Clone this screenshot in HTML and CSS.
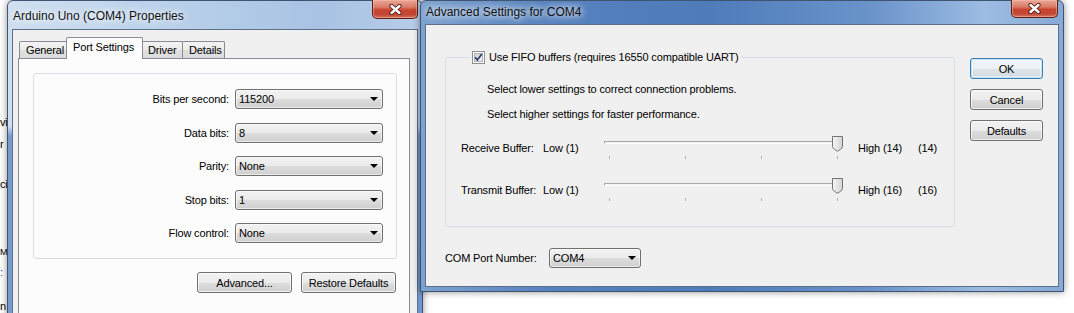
FILE: index.html
```html
<!DOCTYPE html>
<html lang="en">
<head>
    <meta charset="UTF-8">
    <title>COM4 Port Settings</title>
    <link rel="stylesheet" href="styles.css">
</head>
<body>
    <div class="desktop">
        <!-- window behind, only its left edge shows -->
        <div class="backwin">
            <span class="frag frag-1">vi</span>
            <span class="frag frag-2">r</span>
            <span class="frag frag-3">ci</span>
            <span class="frag frag-4">M</span>
            <span class="frag frag-5 link">:</span>
            <span class="frag frag-6">n</span>
        </div>

        <div class="window props">
            <div class="titlebar">
                <span class="title">Arduino Uno (COM4) Properties</span>
                <span class="close">
                    <svg width="13" height="11" viewBox="0 0 13 11">
                        <path d="M2.5 2 L10.5 9 M10.5 2 L2.5 9" stroke="#4a1a14" stroke-width="4.2" stroke-linecap="round"/>
                        <path d="M2.5 2 L10.5 9 M10.5 2 L2.5 9" stroke="#fff" stroke-width="2.4" stroke-linecap="round"/>
                    </svg>
                </span>
            </div>
            <div class="client">
                <div class="tabs">
                    <div class="tab tab-general">General</div>
                    <div class="tab active">Port Settings</div>
                    <div class="tab tab-driver">Driver</div>
                    <div class="tab tab-details">Details</div>
                </div>
                <div class="tab-page">
                    <div class="group port-group">
                        <span class="field-label">Bits per second:</span>
                        <div class="combo">115200</div>
                        <span class="field-label">Data bits:</span>
                        <div class="combo">8</div>
                        <span class="field-label">Parity:</span>
                        <div class="combo">None</div>
                        <span class="field-label">Stop bits:</span>
                        <div class="combo">1</div>
                        <span class="field-label">Flow control:</span>
                        <div class="combo">None</div>
                    </div>
                    <div class="actions">
                        <button class="btn btn-wide">Advanced...</button>
                        <button class="btn btn-wide">Restore Defaults</button>
                    </div>
                </div>
            </div>
        </div>

        <div class="window advanced">
            <div class="titlebar">
                <span class="title">Advanced Settings for COM4</span>
                <span class="close">
                    <svg width="13" height="11" viewBox="0 0 13 11">
                        <path d="M2.5 2 L10.5 9 M10.5 2 L2.5 9" stroke="#4a1a14" stroke-width="4.2" stroke-linecap="round"/>
                        <path d="M2.5 2 L10.5 9 M10.5 2 L2.5 9" stroke="#fff" stroke-width="2.4" stroke-linecap="round"/>
                    </svg>
                </span>
            </div>
            <div class="client adv-client">
                <div class="adv-main">
                    <div class="group fifo-group">
                        <div class="legend">
                            <span class="checkbox">
                                <svg width="13" height="13" viewBox="0 0 13 13">
                                    <defs>
                                        <linearGradient id="cbg" x1="0" y1="0" x2="1" y2="1">
                                            <stop offset="0" stop-color="#cbcfd5"/>
                                            <stop offset="1" stop-color="#f6f6f6"/>
                                        </linearGradient>
                                    </defs>
                                    <rect x="0.5" y="0.5" width="12" height="12" fill="#fff" stroke="#8e8f8f"/>
                                    <rect x="2.5" y="2.5" width="8" height="8" fill="url(#cbg)" stroke="#aeb3b9"/>
                                    <path d="M3.2 6.4 L5.4 9 L9.8 3" fill="none" stroke="#2c3e64" stroke-width="1.7"/>
                                </svg>
                            </span>
                            <span>Use FIFO buffers (requires 16550 compatible UART)</span>
                        </div>
                        <p class="hint hint-lower">Select lower settings to correct connection problems.</p>
                        <p class="hint hint-higher">Select higher settings for faster performance.</p>

                        <div class="buffer-row row-receive">
                            <span class="buf-label">Receive Buffer:</span>
                            <span class="buf-low">Low (1)</span>
                            <div class="slider">
                                <div class="track"></div>
                                <svg class="thumb" width="11" height="16" viewBox="0 0 11 16">
                                    <defs>
                                        <linearGradient id="thg1" x1="0" y1="0" x2="1" y2="0">
                                            <stop offset="0" stop-color="#f6f6f6"/>
                                            <stop offset="1" stop-color="#d4d4d4"/>
                                        </linearGradient>
                                    </defs>
                                    <path d="M0.5 0.5 H10.5 V10.5 Q10.5 12 8.5 13.3 L5.5 15.3 L2.5 13.3 Q0.5 12 0.5 10.5 Z" fill="url(#thg1)" stroke="#727272"/>
                                </svg>
                                <div class="ticks"><i></i><i></i><i></i><i></i></div>
                            </div>
                            <span class="buf-high">High (14)</span>
                            <span class="buf-value">(14)</span>
                        </div>

                        <div class="buffer-row row-transmit">
                            <span class="buf-label">Transmit Buffer:</span>
                            <span class="buf-low">Low (1)</span>
                            <div class="slider">
                                <div class="track"></div>
                                <svg class="thumb" width="11" height="16" viewBox="0 0 11 16">
                                    <path d="M0.5 0.5 H10.5 V10.5 Q10.5 12 8.5 13.3 L5.5 15.3 L2.5 13.3 Q0.5 12 0.5 10.5 Z" fill="url(#thg1)" stroke="#727272"/>
                                </svg>
                                <div class="ticks"><i></i><i></i><i></i><i></i></div>
                            </div>
                            <span class="buf-high">High (16)</span>
                            <span class="buf-value">(16)</span>
                        </div>
                    </div>

                    <div class="com-row">
                        <span class="com-label">COM Port Number:</span>
                        <div class="combo com-combo">COM4</div>
                    </div>
                </div>

                <div class="adv-buttons">
                    <button class="btn btn-default">OK</button>
                    <button class="btn">Cancel</button>
                    <button class="btn">Defaults</button>
                </div>
            </div>
        </div>
    </div>
</body>
</html>
```

FILE: styles.css
```css
* {
    box-sizing: border-box;
}
body {
    margin: 0;
    background: #ffffff;
    font-family: "Liberation Sans", Arial, sans-serif;
    font-size: 11px;
    letter-spacing: -0.15px;
    color: #000;
}
.desktop {
    position: relative;
    width: 1074px;
    height: 313px;
    overflow: hidden;
    background: #ffffff;
}

/* background window strip */
.backwin {
    position: absolute;
    left: 0;
    top: 0;
    width: 12px;
    height: 313px;
    display: flex;
    flex-direction: column;
    line-height: 12px;
}
.frag { white-space: nowrap; }
.frag-1 { margin-top: 116px; }
.frag-2 { margin-top: 10px; }
.frag-3 { margin-top: 28px; }
.frag-4 { margin-top: 56px; font-size: 9px; }
.frag-5 { margin-top: 8px; }
.frag-6 { margin-top: 22px; }
.link { color: #2a5db0; }

/* aero windows */
.window {
    position: absolute;
    top: 0;
    display: flex;
    flex-direction: column;
    border: 1px solid #3f5470;
    border-radius: 6px 6px 0 0;
    box-shadow: 0 0 7px rgba(0, 0, 0, 0.45);
}
.props {
    left: 7px;
    width: 416px;
    height: 330px;
    padding: 0 4px 0 4px;
    background:
        linear-gradient(to bottom, rgba(255,255,255,0) 0, rgba(255,255,255,0) 125px, rgba(80,126,190,0.7) 135px, rgba(80,126,190,0.7) 100%),
        linear-gradient(to right, #cfdff0 0, #b9d0ea 40%, #a8c3e3 75%, #b7cde8 100%);
}
.advanced {
    left: 420px;
    width: 644px;
    height: 292px;
    padding: 0 4px 4px 4px;
    z-index: 2;
    background: linear-gradient(to right, #7ea2d0 0, #5682be 20%, #4e7cba 45%, #6a93ca 70%, #9dbce2 88%, #86a9d6 100%);
}
.titlebar {
    display: flex;
    align-items: flex-start;
    flex: none;
}
.props .titlebar { height: 28px; }
.advanced .titlebar { height: 23px; }
.title {
    font-size: 12px;
    letter-spacing: 0;
    line-height: 14px;
    color: #111;
    text-shadow: 0 0 6px #fff, 0 0 10px rgba(255,255,255,0.9);
    white-space: nowrap;
}
.props .title {
    margin: 8px 0 0 1px;
}
.advanced .title {
    margin: 4px 0 0 1px;
}
.close {
    margin-left: auto;
    width: 46px;
    height: 19px;
    margin-top: -1px;
    display: flex;
    align-items: center;
    justify-content: center;
    border: 1px solid #5a2119;
    border-top: none;
    border-radius: 0 0 5px 5px;
    background: linear-gradient(to bottom, #e9a898 0, #d97b68 40%, #c8452f 55%, #c24634 80%, #d6725e 100%);
    box-shadow: inset 0 0 0 1px rgba(255, 190, 170, 0.5);
}
.props .close { margin-right: 0; }
.advanced .close { width: 47px; margin-right: 1px; height: 18px; }

.client {
    flex: 1;
    background: #f0f0f0;
    border: 1px solid #5c708a;
}

/* property sheet */
.props .client {
    padding: 7px 7px 0 5px;
}
.tabs {
    display: flex;
    align-items: flex-end;
    height: 22px;
    margin-bottom: -1px;
    padding-left: 1px;
}
.tab {
    height: 17px;
    margin-bottom: 1px;
    padding: 2px 6px 0 6px;
    border: 1px solid #898c95;
    border-bottom: none;
    border-radius: 2px 2px 0 0;
    background: linear-gradient(to bottom, #f3f3f3 0, #ebebeb 50%, #dedede 51%, #dcdcdc 100%);
    white-space: nowrap;
}
.tab-general { width: 49px; }
.tab-driver { width: 42px; }
.tab-details { width: 43px; margin-left: -1px; }
.tab.active {
    position: relative;
    z-index: 1;
    height: 22px;
    margin: 0 -2px 0 -2px;
    width: 77px;
    padding-top: 3px;
    background: #fcfcfc;
}
.tab-page {
    height: 300px;
    padding: 14px 12px 0 14px;
    border: 1px solid #898c95;
    background: #fcfcfc;
}
.group {
    border: 1px solid #d5dfe5;
    border-radius: 3px;
}
.port-group {
    display: grid;
    grid-template-columns: 1fr 148px;
    grid-auto-rows: 20px;
    column-gap: 6px;
    row-gap: 13.5px;
    padding: 15px 13px 15px 0;
    height: 186px;
}
.field-label {
    align-self: center;
    text-align: right;
    white-space: nowrap;
}
.combo {
    position: relative;
    height: 20px;
    padding: 3px 0 0 3px;
    line-height: 13px;
    border: 1px solid #707070;
    border-radius: 3px;
    background: linear-gradient(to bottom, #f2f2f2 0, #ebebeb 50%, #dddddd 51%, #cfcfcf 100%);
    box-shadow: inset 0 0 0 1px rgba(255, 255, 255, 0.6);
}
.combo::after {
    content: "";
    position: absolute;
    right: 4px;
    top: 7px;
    border-left: 4px solid transparent;
    border-right: 4px solid transparent;
    border-top: 4px solid #000;
}
.actions {
    display: flex;
    justify-content: flex-end;
    gap: 9px;
    margin-top: 13px;
    padding-right: 1px;
}
.btn {
    display: flex;
    align-items: center;
    justify-content: center;
    height: 21px;
    padding: 0;
    font: inherit;
    letter-spacing: inherit;
    color: #000;
    border: 1px solid #707070;
    border-radius: 3px;
    background: linear-gradient(to bottom, #f2f2f2 0, #ebebeb 50%, #dddddd 51%, #cfcfcf 100%);
    box-shadow: inset 0 0 0 1px rgba(255, 255, 255, 0.7);
}
.btn-wide { width: 95px; }

/* advanced dialog */
.adv-client {
    display: flex;
    padding: 32px 0 0 19px;
}
.adv-main {
    display: flex;
    flex-direction: column;
    width: 510px;
}
.fifo-group {
    height: 170px;
    padding-left: 15px;
}
.legend {
    display: flex;
    align-items: center;
    gap: 4px;
    width: fit-content;
    height: 14px;
    margin: -8px 0 0 9px;
    padding: 0 2px;
    background: #f0f0f0;
    white-space: nowrap;
}
.checkbox {
    display: flex;
    width: 13px;
    height: 13px;
}
.hint {
    margin: 0 0 0 26px;
    line-height: 14px;
}
.hint-lower { margin-top: 18px; }
.hint-higher { margin-top: 11px; }
.buffer-row {
    display: flex;
    align-items: flex-start;
    height: 24px;
}
.row-receive { margin-top: 15px; }
.row-transmit { margin-top: 18px; }
.buffer-row span {
    margin-top: 5px;
    line-height: 14px;
    white-space: nowrap;
}
.buf-label { width: 82px; }
.buf-low { width: 61px; }
.buf-high { width: 60px; }
.slider {
    position: relative;
    width: 254px;
    height: 24px;
}
.track {
    width: 238px;
    height: 3px;
    margin-top: 5px;
    border-top: 1px solid #a9a9a9;
    border-left: 1px solid #a9a9a9;
    border-bottom: 1px solid #ffffff;
}
.thumb {
    position: absolute;
    left: 228px;
    top: 0;
}
.ticks {
    display: flex;
    justify-content: space-between;
    width: 234px;
    height: 3px;
    margin-top: 12px;
    padding-left: 5px;
}
.ticks i {
    width: 1px;
    height: 3px;
    background: #b0b0b0;
}
.com-row {
    display: flex;
    align-items: center;
    margin-top: 21px;
}
.com-label {
    width: 104px;
    white-space: nowrap;
}
.com-combo {
    width: 92px;
}
.adv-buttons {
    display: flex;
    flex-direction: column;
    gap: 10px;
    width: 73px;
    margin: 1px 0 0 15px;
}
.adv-buttons .btn {
    width: 73px;
}
.btn-default {
    border-color: #3c7fb1;
    box-shadow: inset 0 0 0 1px #bfe4f8, inset 0 0 0 2px rgba(255, 255, 255, 0.5);
    background: linear-gradient(to bottom, #f4f8fb 0, #ebf0f4 50%, #dde4ea 51%, #d2dbe2 100%);
}
```
